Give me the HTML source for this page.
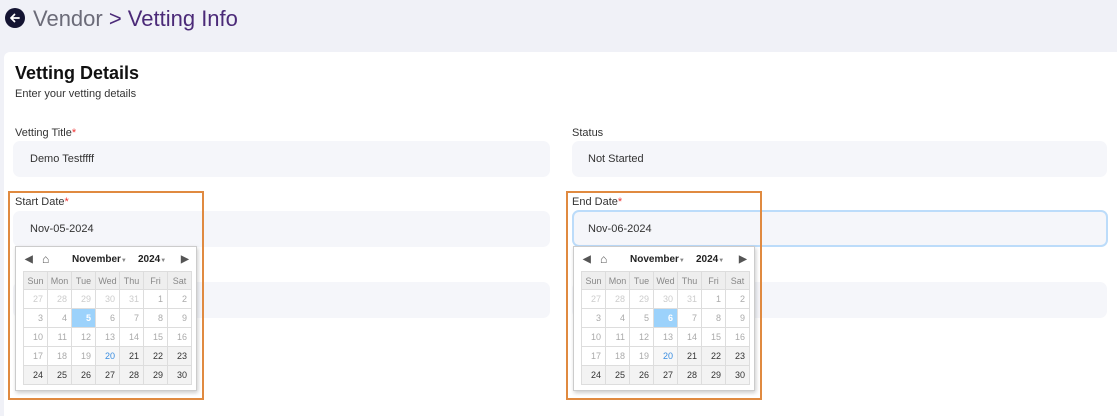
<!DOCTYPE html><html><head><style>
*{box-sizing:border-box;margin:0;padding:0}
body{width:1117px;height:416px;background:#f0f1f7;font-family:"Liberation Sans",Arial,sans-serif;position:relative;overflow:hidden}
.a{position:absolute}
.card{left:4px;top:52px;width:1113px;height:364px;background:#fff;border-radius:6px 0 0 0}
.lbl{font-size:11px;color:#333}
.lbl i{color:#e33;font-style:normal}
.inp{height:36px;background:#f5f6fa;border-radius:7px;font-size:11px;color:#333;padding:12px 0 0 17px}
.box{border:2px solid #e08a40;width:196px;height:209px}
.cal{width:182px;height:145px;background:#fff;border:1px solid #ccc;box-shadow:1px 2px 4px rgba(0,0,0,.2)}
.cal table{position:absolute;left:7px;top:24px;border-collapse:collapse;font-size:9px}
.cal td{width:24px;height:19px;border:1px solid #ddd;text-align:right;padding-right:4px;color:#aaa;background:#fff}
.cal th{height:18px;border:1px solid #ddd;background:#eee;color:#888;font-weight:normal;font-size:9px}
.cal td.l{color:#ccc}.cal td.s{background:#9cd2fb;color:#fff;font-weight:bold}
.cal td.b{color:#3a8de0;background:#f7f7f7}.cal td.d{color:#333;background:#f3f3f3}
.hd{position:absolute;top:7px;font-size:10px;font-weight:bold;color:#222}
</style></head><body>
<div class="a" style="left:5px;top:8px;width:20px;height:20px;border-radius:50%;background:#141432"></div>
<svg class="a" style="left:5px;top:8px" width="20" height="20" viewBox="0 0 20 20"><path d="M14 10H6M9.5 6.5L6 10l3.5 3.5" stroke="#fff" stroke-width="1.8" fill="none" stroke-linecap="round" stroke-linejoin="round"/></svg>
<div class="a" style="left:33px;top:6px;font-size:22px;color:#6b6b78">Vendor <span style="color:#4b2a78">&gt; Vetting Info</span></div>
<div class="a card"></div>
<div class="a" style="left:15px;top:63px;font-size:18px;font-weight:bold;color:#111">Vetting Details</div>
<div class="a" style="left:15px;top:88px;font-size:11px;color:#333">Enter your vetting details</div>
<div class="a lbl" style="left:15px;top:127px">Vetting Title<i>*</i></div>
<div class="a inp" style="left:13px;top:141px;width:537px">Demo Testffff</div>
<div class="a lbl" style="left:572px;top:127px">Status</div>
<div class="a inp" style="left:572px;top:141px;width:535px;padding-left:16px">Not Started</div>
<div class="a inp" style="left:13px;top:282px;width:537px;padding:0"></div>
<div class="a inp" style="left:572px;top:282px;width:535px;padding:0"></div>
<div class="a lbl" style="left:15px;top:196px">Start Date<i>*</i></div>
<div class="a inp" style="left:13px;top:211px;width:537px">Nov-05-2024</div>
<div class="a lbl" style="left:572px;top:196px">End Date<i>*</i></div>
<div class="a inp" style="left:572px;top:210px;width:536px;height:37px;border:2px solid #bcdcfa;padding:11px 0 0 14px">Nov-06-2024</div>
<div class="a box" style="left:8px;top:191px"></div>
<div class="a box" style="left:566px;top:191px"></div>
<div class="a cal" id="c1" style="left:15px;top:246px"></div>
<div class="a cal" id="c2" style="left:573px;top:246px"></div>
<script>
function mk(id,sel){var h='<span class="hd" style="left:9px;color:#555">&#9664;</span><span class="hd" style="left:26px;color:#555;font-size:12px;top:5px">&#8962;</span><span class="hd" style="left:56px">November<span style="font-size:6px;color:#888">&#9660;</span></span><span class="hd" style="left:122px">2024<span style="font-size:6px;color:#888">&#9660;</span></span><span class="hd" style="left:165px;color:#555">&#9654;</span><table><tr>';
['Sun','Mon','Tue','Wed','Thu','Fri','Sat'].forEach(function(d){h+='<th>'+d+'</th>'});h+='</tr>';
var days=[27,28,29,30,31];for(var i=1;i<=30;i++)days.push(i);
for(var r=0;r<5;r++){h+='<tr>';for(var c=0;c<7;c++){var k=r*7+c,d=days[k],cl='';if(k<5)cl='l';else if(d==sel)cl='s';else if(d==20)cl='b';else if(d>20)cl='d';h+='<td class="'+cl+'">'+d+'</td>'}h+='</tr>'}
document.getElementById(id).innerHTML=h+'</table>'}
mk('c1',5);mk('c2',6);
</script>
</body></html>
